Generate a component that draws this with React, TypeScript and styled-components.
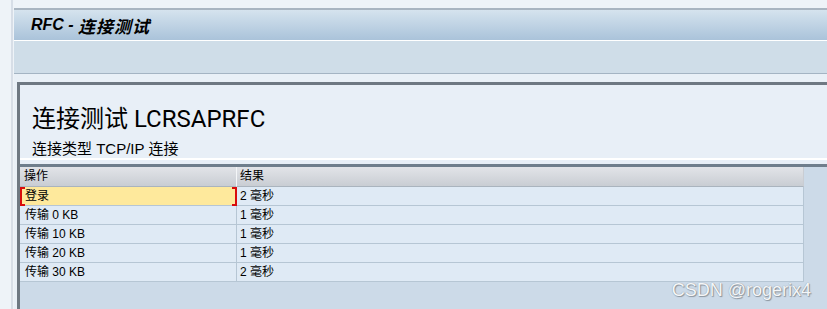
import React from 'react';
import styled, { createGlobalStyle } from 'styled-components';

const GlobalStyle = createGlobalStyle`
    html, body {
        margin: 0;
        padding: 0;
        height: 100%;
        background: #eef3f8;
        overflow: hidden;
    }
    #root {
        height: 100%;
    }
`

const CJK = `"Liberation Sans", "Noto Sans CJK SC", sans-serif`

type ResultRow = {
    action: string // what was tested
    result: string // measured time
    selected?: boolean
}

const rows: ResultRow[] = [
    { action: '登录', result: '2 毫秒', selected: true },
    { action: '传输 0 KB', result: '1 毫秒' },
    { action: '传输 10 KB', result: '1 毫秒' },
    { action: '传输 20 KB', result: '1 毫秒' },
    { action: '传输 30 KB', result: '2 毫秒' },
]

const Page = styled.div`
    position: relative;
    height: 100%;
    padding-left: 11px;
    box-sizing: border-box;
    font-family: ${CJK};
`

const Frame = styled.div`
    height: 100%;
    box-sizing: border-box;
    border-left: 2px solid #d7dee7;
    padding: 8px 0 0 1px;
    display: flex;
    flex-direction: column;
`

const Window = styled.div`
    flex: 1;
    display: flex;
    flex-direction: column;
    border-top: 2px solid #a9b5c1;
    background: #e9f0f7;
`

const TitleBar = styled.div`
    height: 30px;
    display: flex;
    align-items: center;
    padding-left: 17px;
    background: linear-gradient(#d5e3ee, #aac3da);
    border-bottom: 1px solid #ffffff;
    font-weight: bold;
    font-style: italic;
    font-size: 16px;
    color: #000;
    span {
        font-size: 17px;
        letter-spacing: 1px;
    }
`

const Toolbar = styled.div`
    height: 32px;
    background: #cfdde8;
    border-bottom: 1px solid #a4b4c3;
`

const Content = styled.div`
    flex: 1;
    display: flex;
    flex-direction: column;
    margin: 8px 0 0 3px;
    border-left: 3px solid #6e7882;
    border-top: 3px solid #6e7882;
    background: #e8eff7;
`

const HeaderPanel = styled.div`
    padding: 20px 0 1px 12px;
    border-bottom: 2px solid #ffffff;
`

const Heading = styled.div`
    font-family: Roboto, "Noto Sans CJK SC", sans-serif;
    font-size: 24px;
    line-height: 28px;
    color: #000;
`

const SubHeading = styled.div`
    margin-top: 7px;
    font-size: 15px;
    line-height: 17px;
    color: #000;
`

const TableArea = styled.div`
    flex: 1;
    margin-top: 4px;
    border-top: 3px solid #6f7e8c;
    background: #ccdae8;
`

const Grid = styled.div`
    display: grid;
    grid-template-columns: 217px 567px;
    font-size: 12px;
    color: #000;
`

const HeadCell = styled.div<{ $first?: boolean }>`
    height: 19px;
    line-height: 19px;
    padding-left: ${p => p.$first ? '4px' : '3px'};
    background: linear-gradient(#e2e4e8, #c9cdd3);
    border-bottom: 1px solid #aab4be;
    border-right: 1px solid ${p => p.$first ? '#f4f6f8' : '#c9cdd3'};
`

const Cell = styled.div<{ $first?: boolean; $selected?: boolean }>`
    position: relative;
    height: 18px;
    line-height: 18px;
    padding-left: ${p => p.$first ? '5px' : '3px'};
    background: ${p => p.$selected ? '#fee99c' : '#dfeaf5'};
    border-bottom: 1px solid #b6c6d4;
    border-right: 1px solid #b6c6d4;
    white-space: nowrap;

    ${p => p.$selected && `
        &::before, &::after {
            content: '';
            position: absolute;
            top: 0;
            bottom: -1px;
            width: 3px;
            border: 2px solid #d80c0c;
        }
        &::before {
            left: 0;
            border-right: none;
        }
        &::after {
            right: -1px;
            border-left: none;
        }
    `}
`

const Watermark = styled.div`
    position: absolute;
    right: 16px;
    bottom: 8px;
    font-family: "Liberation Sans", sans-serif;
    font-size: 18px;
    color: #f4f6f8;
    text-shadow: 0 0 1px #7d8690, 1px 1px 1px #8c959e;
`

export default function App() {
    return (
        <Page>
            <GlobalStyle />
            <Frame>
                <Window>
                    <TitleBar>RFC -&nbsp;<span>连接测试</span></TitleBar>
                    <Toolbar />
                    <Content>
                        <HeaderPanel>
                            <Heading>连接测试 LCRSAPRFC</Heading>
                            <SubHeading>连接类型 TCP/IP 连接</SubHeading>
                        </HeaderPanel>
                        <TableArea>
                            <Grid>
                                <HeadCell $first>操作</HeadCell>
                                <HeadCell>结果</HeadCell>
                                {rows.map(r => (
                                    <React.Fragment key={r.action}>
                                        <Cell $first $selected={r.selected}>{r.action}</Cell>
                                        <Cell>{r.result}</Cell>
                                    </React.Fragment>
                                ))}
                            </Grid>
                        </TableArea>
                    </Content>
                </Window>
            </Frame>
            <Watermark>CSDN @rogerix4</Watermark>
        </Page>
    )
}
